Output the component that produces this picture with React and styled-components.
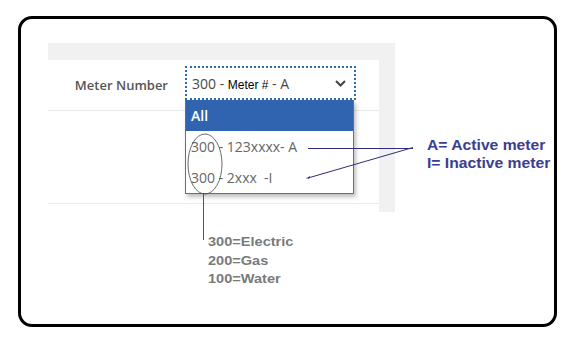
import React from 'react';
import styled, {createGlobalStyle} from 'styled-components';

const GlobalStyle = createGlobalStyle`
  html, body {
    margin: 0;
    padding: 0;
    background: #fff;
  }
`;

const Stage = styled.div`
  position: relative;
  width: 577px;
  height: 356px;
  padding: 16px 0 0 18px;
  box-sizing: border-box;
  background: #fff;
`;

const Frame = styled.div`
  width: 539px;
  height: 311px;
  box-sizing: border-box;
  border: 3px solid #000;
  border-radius: 14px;
  padding: 24px 0 0 27px;
  display: flex;
  flex-direction: column;
`;

const TopRow = styled.div`
  display: flex;
  align-items: flex-start;
`;

const Panel = styled.div`
  width: 347px;
  height: 169px;
  box-sizing: border-box;
  padding-top: 17px;
  background: #f1f1f1;
`;

const Card = styled.div`
  width: 331px;
  height: 152px;
  background: #fff;
`;

const HeaderRow = styled.div`
  display: grid;
  grid-template-columns: 137px 171px;
  align-items: center;
  height: 51px;
  box-sizing: border-box;
  padding: 6px 0 11px;
  border-bottom: 1px solid #e9e9e9;
`;

const Label = styled.div`
  text-align: right;
  padding-right: 17px;
  font-family: "Open Sans", sans-serif;
  font-weight: 600;
  font-size: 13px;
  color: #555;
  padding-top: 3px;
`;

const SelectWrap = styled.div`
  position: relative;
`;

const SelectBox = styled.div`
  height: 34px;
  box-sizing: border-box;
  border: 2px dotted #2a6db0;
  display: flex;
  align-items: center;
  justify-content: space-between;
  padding: 0 8px 0 5px;
  font-family: "Open Sans", sans-serif;
  font-size: 14px;
  font-weight: 500;
  color: #4a4a4a;
  white-space: pre;
`;

const Strong = styled.span`
  font-family: "Liberation Sans", Arial, sans-serif;
  font-size: 12px;
  color: #000;
`;

const List = styled.div`
  position: absolute;
  top: 100%;
  left: 0;
  width: 169px;
  box-sizing: border-box;
  border: 1px solid #6e6e6e;
  border-top: none;
  background: #fff;
  box-shadow: 2px 3px 4px rgba(0, 0, 0, 0.25);
`;

const Option = styled.div`
  height: 31px;
  display: flex;
  align-items: center;
  padding-left: 5px;
  font-family: "Open Sans", sans-serif;
  font-size: 14px;
  font-weight: ${p => (p.$active ? 600 : 400)};
  color: ${p => (p.$active ? '#fff' : '#666')};
  background: ${p => (p.$active ? '#3064b1' : '#fff')};
  white-space: pre;
`;

const Body = styled.div`
  height: 92px;
  border-bottom: 1px solid #ececec;
`;

const Callout = styled.div`
  margin: 93px 0 0 32px;
  font-family: "Liberation Sans", Arial, sans-serif;
  font-weight: bold;
  font-size: 14px;
  line-height: 18px;
  color: #3b3d8f;
  white-space: nowrap;
  transform: scaleX(1.12);
  transform-origin: left top;
`;

const Legend = styled.div`
  margin: 21px 0 0 160px;
  font-family: "Liberation Sans", Arial, sans-serif;
  font-weight: bold;
  font-size: 13px;
  line-height: 18.5px;
  color: #7a7a7a;
  transform: scaleX(1.12);
  transform-origin: left top;
`;

const Overlay = styled.svg`
  position: absolute;
  top: 0;
  left: 0;
  pointer-events: none;
`;

const Chevron = () => (
  <svg width="11" height="7" viewBox="0 0 11 7">
    <path d="M1 1l4.5 4.5L10 1" fill="none" stroke="#444" strokeWidth="2" />
  </svg>
);

export default function App() {
  return (
    <Stage>
      <GlobalStyle />
      <Frame>
        <TopRow>
          <Panel>
            <Card>
              <HeaderRow>
                <Label>Meter Number</Label>
                <SelectWrap>
                  <SelectBox>
                    <span>300 - <Strong>Meter #</Strong> - A</span>
                    <Chevron />
                  </SelectBox>
                  <List>
                    <Option $active>All</Option>
                    <Option>300 - 123xxxx- A</Option>
                    <Option>300 - 2xxx  -I</Option>
                  </List>
                </SelectWrap>
              </HeaderRow>
              <Body />
            </Card>
          </Panel>
          <Callout>
            <div>A= Active meter</div>
            <div>I= Inactive meter</div>
          </Callout>
        </TopRow>
        <Legend>
          <div>300=Electric</div>
          <div>200=Gas</div>
          <div>100=Water</div>
        </Legend>
      </Frame>
      <Overlay width="577" height="356" viewBox="0 0 577 356">
        <ellipse cx="205" cy="164" rx="17" ry="30" fill="none" stroke="#444" strokeWidth="0.8" />
        <line x1="203.5" y1="194" x2="203.5" y2="240" stroke="#555" strokeWidth="1" />
        <line x1="308" y1="148.5" x2="413" y2="148.5" stroke="#2b2d78" strokeWidth="1" />
        <line x1="413" y1="147.5" x2="308" y2="178" stroke="#2b2d78" strokeWidth="1" />
        <path d="M306 178.6l4-2.6l-0.6 2.4z" fill="#2b2d78" />
      </Overlay>
    </Stage>
  );
}
